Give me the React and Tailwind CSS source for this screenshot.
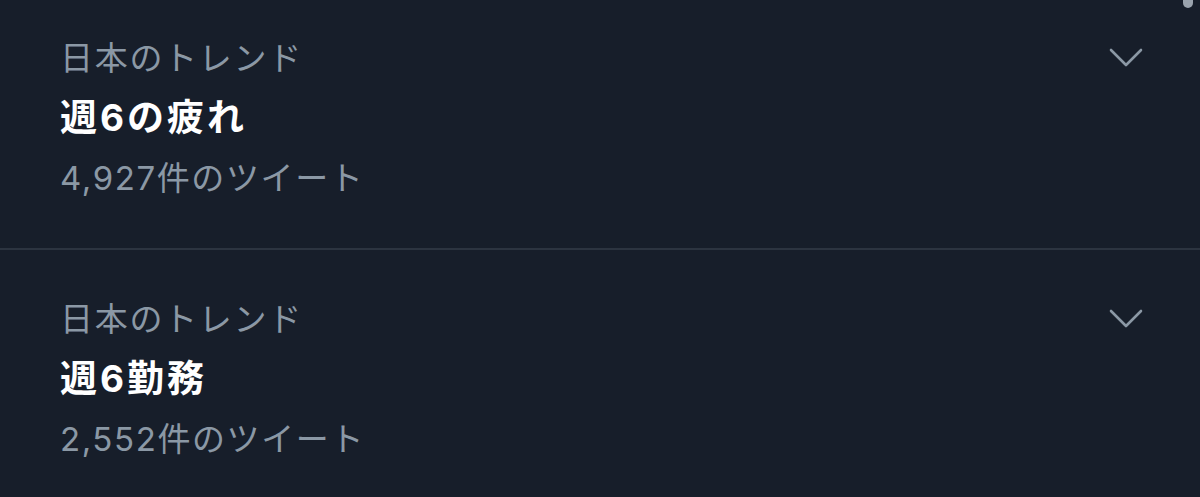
const font = { fontFamily: 'Inter, "Noto Sans CJK JP", sans-serif' };

const trends = [
  { label: '日本のトレンド', title: '週6の疲れ', count: '4,927件のツイート' },
  { label: '日本のトレンド', title: '週6勤務', count: '2,552件のツイート' },
];

function Chevron() {
  return (
    <svg width="36" height="22" viewBox="0 0 36 22" fill="none" stroke="#8b98a5" strokeWidth="2.6" strokeLinecap="round" strokeLinejoin="round">
      <polyline points="3,4 18,19 33,4" />
    </svg>
  );
}

function TrendItem({ trend, first }) {
  return (
    <div className={`flex justify-between pl-[60px] pr-[56px] ${first ? 'pt-[28px]' : 'pt-[39px]'} pb-[40px]`}>
      <div className="flex flex-col">
        <div className="text-[33px] leading-[60px] text-[#8b98a5] tracking-[1.7px]">{trend.label}</div>
        <div className="text-[37px] leading-[60px] font-bold text-white tracking-[3px]">{trend.title}</div>
        <div className="text-[33px] leading-[60px] text-[#8b98a5] tracking-[1.6px]">{trend.count}</div>
      </div>
      <div className="pt-[18px]">
        <Chevron />
      </div>
    </div>
  );
}

export default function App() {
  return (
    <div className="relative w-[1200px] h-[497px] overflow-hidden bg-[#171e2a]" style={font}>
      <div className="absolute top-[-6px] right-[7px] w-[10px] h-[14px] rounded-full bg-[#9aa3ad]"></div>
      {trends.map((t, i) => (
        <div key={i}>
          {i > 0 && <div className="h-[2px] bg-[#2c3440]"></div>}
          <TrendItem trend={t} first={i === 0} />
        </div>
      ))}
    </div>
  );
}
